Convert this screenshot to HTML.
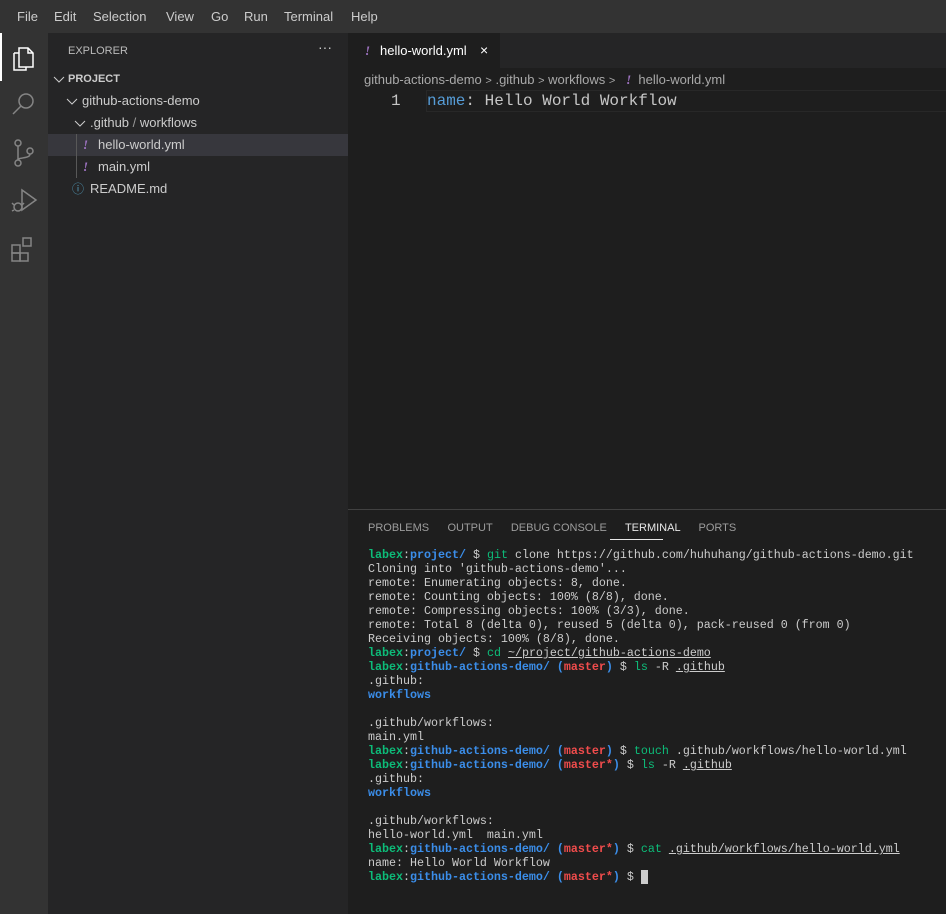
<!DOCTYPE html>
<html><head><style>
*{margin:0;padding:0;box-sizing:border-box}
body{width:946px;height:914px;background:#1e1e1e;font-family:"Liberation Sans",sans-serif;position:relative;overflow:hidden;color:#ccc}
.abs{position:absolute}
#menu{left:0;top:0;width:946px;height:33px;background:#333333;font-size:13px;color:#ccc}
#menu span{position:absolute;top:9px}
#act{left:0;top:33px;width:48px;height:881px;background:#333333}
#side{left:48px;top:33px;width:300px;height:881px;background:#252526;font-size:13px}
.row{position:absolute;left:0;width:300px;height:22px;line-height:22px;color:#ccc}
.ex{color:#a074c4;font-style:italic;font-weight:bold;font-family:"Liberation Serif",serif}
.chev{position:absolute;top:7px}
#tabs{left:348px;top:33px;width:598px;height:35px;background:#252526}
.term{font-family:"Liberation Mono",monospace;font-size:11.67px;line-height:14px;white-space:pre;color:#ccc}
.g{color:#0dbc79;font-weight:bold}.b{color:#3b8eea;font-weight:bold}.r{color:#f14c4c;font-weight:bold}.gc{color:#0dbc79}.u{text-decoration:underline}
</style></head><body>
<div id="menu" class="abs">
<span style="left:17px">File</span><span style="left:54px">Edit</span><span style="left:93px">Selection</span><span style="left:166px">View</span><span style="left:211px">Go</span><span style="left:244px">Run</span><span style="left:284px">Terminal</span><span style="left:351px">Help</span>
</div>
<div id="act" class="abs">
<div class="abs" style="left:0;top:0;width:2px;height:48px;background:#fff"></div>
<svg class="abs" style="left:0;top:0" width="48" height="250" viewBox="0 0 48 250" fill="none" stroke-width="1.5">
<g stroke="#fff"><path d="M19 15h9l5 5v14h-14z"/><path d="M14 20h5M14 20v17h12v-3"/><path d="M28 15v5h5"/></g>
<g stroke="#858585"><circle cx="26" cy="68" r="7"/><path d="M21 73l-8 8"/>
<circle cx="18" cy="110" r="3"/><circle cx="18" cy="130" r="3"/><circle cx="30" cy="118" r="3"/><path d="M18 113v14M30 121c0 5-12 3-12 6"/>
<path d="M22 157v20l14-10z"/><circle cx="18" cy="174" r="4"/><path d="M12 170l2 2M12 178l2-1M24 170l-2 2"/>
<rect x="12" y="212" width="8" height="8"/><rect x="12" y="220" width="8" height="8"/><rect x="20" y="220" width="8" height="8"/><rect x="23" y="205" width="8" height="8"/></g>
</svg>
</div>
<div id="side" class="abs">
<div class="abs" style="left:20px;top:12px;font-size:11px;color:#bbb">EXPLORER</div>
<div class="abs" style="left:270px;top:6px;font-size:14px;color:#ccc">···</div>
<div class="row" style="top:35px;padding-left:20px;font-weight:bold;font-size:11px"><svg class="chev" style="left:5px" width="12" height="8"><path d="M1 2l5 5 5-5" stroke="#ccc" fill="none"/></svg>PROJECT</div>
<div class="row" style="top:57px;padding-left:34px"><svg class="chev" style="left:18px" width="12" height="8"><path d="M1 2l5 5 5-5" stroke="#ccc" fill="none"/></svg>github-actions-demo</div>
<div class="row" style="top:79px;padding-left:42px"><svg class="chev" style="left:26px" width="12" height="8"><path d="M1 2l5 5 5-5" stroke="#ccc" fill="none"/></svg>.github<span style="color:#999"> / </span>workflows</div>
<div class="row" style="top:101px;background:#37373d;padding-left:50px"><span class="ex" style="position:absolute;left:35px">!</span>hello-world.yml</div>
<div class="row" style="top:123px;padding-left:50px"><span class="ex" style="position:absolute;left:35px">!</span>main.yml</div>
<div class="abs" style="left:28px;top:101px;width:1px;height:44px;background:#585858"></div>
<div class="row" style="top:145px;padding-left:42px"><span style="position:absolute;left:24px;color:#519aba;font-size:12px">ⓘ</span>README.md</div>
</div>
<div id="tabs" class="abs">
<div class="abs" style="left:0;top:0;width:152px;height:35px;background:#1e1e1e;font-size:13px;color:#fff;line-height:35px"><span class="ex" style="position:absolute;left:17px">!</span><span style="position:absolute;left:32px">hello-world.yml</span><span style="position:absolute;left:132px;font-size:14px">×</span></div>
</div>
<div class="abs" style="left:364px;top:72px;font-size:13px;color:#a9a9a9;white-space:pre">github-actions-demo <span style="font-size:11px">&gt;</span> .github <span style="font-size:11px">&gt;</span> workflows <span style="font-size:11px">&gt;</span>   <span class="ex">!</span>  hello-world.yml</div>
<div class="abs" style="left:426px;top:90px;width:520px;height:22px;border:1px solid #282828;border-right:none"></div>
<div class="abs" style="left:391px;top:91px;font-family:'Liberation Mono',monospace;font-size:16px;line-height:20px;color:#c6c6c6">1</div>
<div class="abs" style="left:427px;top:91px;font-family:'Liberation Mono',monospace;font-size:16px;line-height:20px;color:#c6c6c6;white-space:pre"><span style="color:#569cd6">name</span>: Hello World Workflow</div>
<div class="abs" style="left:348px;top:509px;width:598px;height:1px;background:#414141"></div>
<div class="abs" style="left:368px;top:522px;font-size:11px;color:#9d9d9d;white-space:pre">PROBLEMS      OUTPUT      DEBUG CONSOLE      <span style="color:#e7e7e7">TERMINAL</span>      PORTS</div>
<div class="abs" style="left:610px;top:539px;width:53px;height:1px;background:#e7e7e7"></div>
<div class="abs term" style="left:368px;top:548px"><span class="g">labex</span>:<span class="b">project/</span> $ <span class="gc">git</span> clone https://github.com/huhuhang/github-actions-demo.git
Cloning into 'github-actions-demo'...
remote: Enumerating objects: 8, done.
remote: Counting objects: 100% (8/8), done.
remote: Compressing objects: 100% (3/3), done.
remote: Total 8 (delta 0), reused 5 (delta 0), pack-reused 0 (from 0)
Receiving objects: 100% (8/8), done.
<span class="g">labex</span>:<span class="b">project/</span> $ <span class="gc">cd</span> <span class="u">~/project/github-actions-demo</span>
<span class="g">labex</span>:<span class="b">github-actions-demo/</span> <span class="b">(</span><span class="r">master</span><span class="b">)</span> $ <span class="gc">ls</span> -R <span class="u">.github</span>
.github:
<span class="b">workflows</span>

.github/workflows:
main.yml
<span class="g">labex</span>:<span class="b">github-actions-demo/</span> <span class="b">(</span><span class="r">master</span><span class="b">)</span> $ <span class="gc">touch</span> .github/workflows/hello-world.yml
<span class="g">labex</span>:<span class="b">github-actions-demo/</span> <span class="b">(</span><span class="r">master*</span><span class="b">)</span> $ <span class="gc">ls</span> -R <span class="u">.github</span>
.github:
<span class="b">workflows</span>

.github/workflows:
hello-world.yml  main.yml
<span class="g">labex</span>:<span class="b">github-actions-demo/</span> <span class="b">(</span><span class="r">master*</span><span class="b">)</span> $ <span class="gc">cat</span> <span class="u">.github/workflows/hello-world.yml</span>
name: Hello World Workflow
<span class="g">labex</span>:<span class="b">github-actions-demo/</span> <span class="b">(</span><span class="r">master*</span><span class="b">)</span> $ <span style="background:#ccc"> </span></div>
</body></html>
